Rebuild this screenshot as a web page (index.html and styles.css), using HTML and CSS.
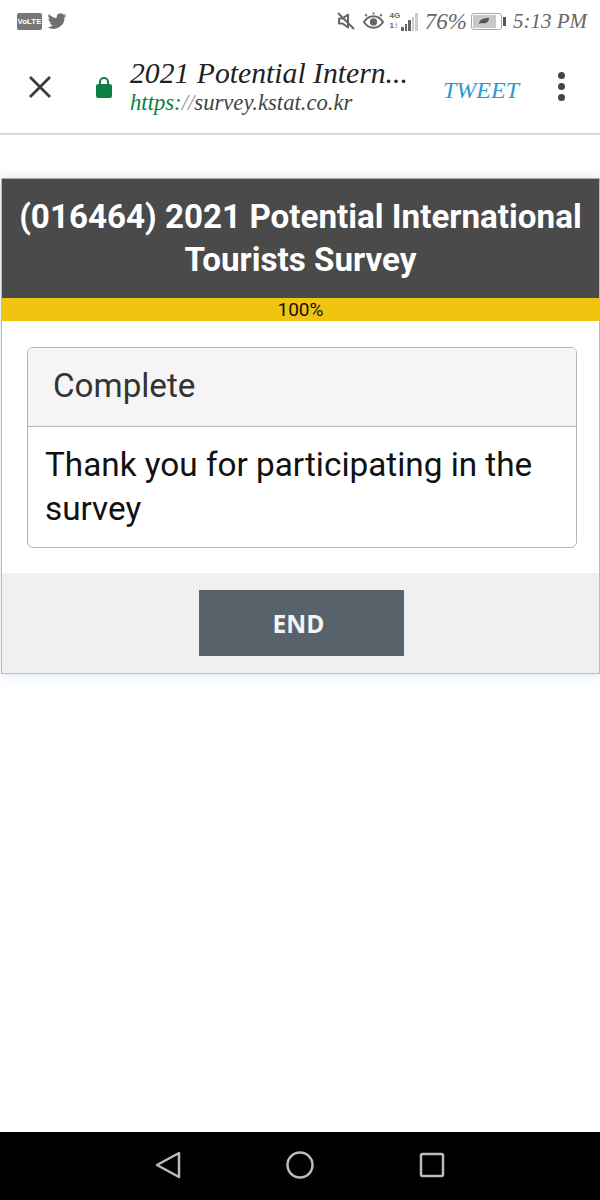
FILE: index.html
```html
<!DOCTYPE html>
<html lang="en">
<head>
  <meta charset="UTF-8">
  <meta name="viewport" content="width=device-width, initial-scale=1.0">
  <title>2021 Potential International Tourists Survey</title>
  <link rel="stylesheet" href="styles.css">
</head>
<body>
  <div id="app">
    <div class="status-bar">
      <div class="status-left">
        <span class="volte">VoLTE</span>
        <svg class="icon-bird" viewBox="0 0 24 24"><path d="M23 5c-.8.4-1.7.6-2.600.7.900-.6 1.600-1.400 2-2.500-.9.500-1.800.9-2.900 1.100A4.600 4.600 0 0 0 11.700 8.500C7.900 8.300 4.500 6.500 2.200 3.700c-1.200 2.100-.6 4.800 1.400 6.200-.7 0-1.400-.2-2-.6 0 2.300 1.600 4.200 3.700 4.600-.7.200-1.400.2-2.100.1.600 1.900 2.300 3.200 4.300 3.200A9.300 9.300 0 0 1 .8 19.200 13.100 13.100 0 0 0 21 7.500c.8-.7 1.500-1.500 2-2.500z"/></svg>
      </div>
      <div class="status-right">
        <svg class="icon-mute" viewBox="0 0 20 20"><path class="outline" d="M3 7.500h3.500L12 3.500v13l-5.500-4H3z"/><path class="slash" d="M2 2l16 16"/></svg>
        <svg class="icon-eye" viewBox="0 0 24 20"><path class="line" d="M2 11c3-4.500 6-6 10-6s7 1.500 10 6c-3 4.500-6 6-10 6s-7-1.500-10-6z"/><circle cx="12" cy="11" r="3.800"/><path class="line" d="M5 5L3.500 3M12 3V1M19 5l1.500-2"/></svg>
        <div class="network">
          <div class="network-labels"><span>4G</span><span>1↕</span></div>
          <div class="bars">
            <i class="bar b1"></i><i class="bar b2"></i><i class="bar b3"></i><i class="bar b4 off"></i><i class="bar b5 off"></i>
          </div>
        </div>
        <span class="status-text">76%</span>
        <div class="battery">
          <div class="battery-body"><div class="battery-fill"><svg viewBox="0 0 12 8"><path d="M1 7C1 3 5 1 11 1c0 4-3 6-7 5z"/></svg></div></div>
          <div class="battery-tip"></div>
        </div>
        <span class="status-text time">5:13 PM</span>
      </div>
    </div>

    <div class="toolbar">
      <svg class="icon-close" viewBox="0 0 24 24"><path d="M2 2l20 20M22 2L2 22"/></svg>
      <svg class="icon-lock" viewBox="0 0 18 22"><path class="shackle" d="M5 9V6a4 4 0 0 1 8 0v3"/><rect x="1" y="8" width="16" height="14" rx="2.500"/></svg>
      <div class="toolbar-title">
        <div class="page-title">2021 Potential Intern...</div>
        <div class="page-url"><span class="scheme">https:</span><span class="slashes">//</span>survey.kstat.co.kr</div>
      </div>
      <span class="tweet">TWEET</span>
      <div class="menu-dots"><i></i><i></i><i></i></div>
    </div>

    <div class="content">
      <div class="survey">
        <div class="survey-head">(016464) 2021 Potential International Tourists Survey</div>
        <div class="progress">100%</div>
        <div class="survey-body">
          <div class="panel">
            <div class="panel-head">Complete</div>
            <div class="panel-text">Thank you for participating in the survey</div>
          </div>
        </div>
        <div class="survey-foot">
          <a class="end-btn">END</a>
        </div>
      </div>
    </div>

    <div class="nav-bar">
      <svg viewBox="0 0 26 28"><path d="M24 2v24L2 14z"/></svg>
      <svg viewBox="0 0 28 28"><circle cx="14" cy="14" r="12.500"/></svg>
      <svg viewBox="0 0 26 26"><rect x="2" y="2" width="22" height="22" rx="1.500"/></svg>
    </div>
  </div>
</body>
</html>
```

FILE: styles.css
```css
* {
  box-sizing: border-box;
}
html, body {
  margin: 0;
  padding: 0;
}
body {
  width: 600px;
  height: 1200px;
  overflow: hidden;
  background-color: #fff;
  font-family: Roboto, "Liberation Sans", sans-serif;
}
#app {
  height: 1200px;
  display: flex;
  flex-direction: column;
}

/* status bar */
.status-bar {
  height: 42px;
  padding: 0 13px 0 17px;
  display: flex;
  justify-content: space-between;
  align-items: center;
  color: #666;
}
.status-left, .status-right {
  display: flex;
  align-items: center;
}
.volte {
  width: 25px;
  height: 17px;
  background-color: #777;
  border-radius: 2px;
  color: #fff;
  font: bold 8px/17px "Liberation Sans", sans-serif;
  text-align: center;
}
.icon-bird {
  width: 20px;
  height: 20px;
  margin-left: 5px;
  fill: #707070;
}
.icon-mute {
  width: 20px;
  height: 20px;
  fill: none;
}
.icon-mute .outline {
  stroke: #666;
  stroke-width: 2;
  stroke-linejoin: round;
}
.icon-mute .slash {
  stroke: #666;
  stroke-width: 2;
}
.icon-eye {
  width: 23px;
  height: 20px;
  margin-left: 6px;
  fill: #666;
}
.icon-eye .line {
  fill: none;
  stroke: #666;
  stroke-width: 2;
}
.network {
  margin-left: 5px;
  display: flex;
  align-items: flex-end;
  height: 20px;
}
.network-labels {
  display: flex;
  flex-direction: column;
  font: bold 8px/10px "Liberation Sans", sans-serif;
}
.bars {
  display: flex;
  align-items: flex-end;
  gap: 1px;
  margin-left: 1px;
  height: 18px;
}
.bar {
  width: 2.500px;
  background-color: #666;
}
.bar.off {
  background-color: #ccc;
}
.b1 { height: 4px; }
.b2 { height: 7px; }
.b3 { height: 11px; }
.b4 { height: 14px; }
.b5 { height: 18px; }
.status-text {
  font: italic 23px/1 "Liberation Serif", serif;
  color: #666;
  margin-left: 7px;
  white-space: nowrap;
}
.status-text.time {
  margin-left: 7px;
  font-size: 21px;
}
.battery {
  display: flex;
  align-items: center;
  margin-left: 4px;
}
.battery-body {
  width: 31px;
  height: 17px;
  border: 1px solid #aaa;
  border-radius: 3px;
  padding: 1px;
  background-color: #fff;
}
.battery-fill {
  width: 23px;
  height: 13px;
  background-color: #c8c8c8;
  display: flex;
  align-items: center;
  justify-content: center;
}
.battery-fill svg {
  width: 12px;
  height: 8px;
  fill: #555;
}
.battery-tip {
  width: 3px;
  height: 9px;
  margin-left: 1px;
  background-color: #555;
}

/* toolbar */
.toolbar {
  height: 93px;
  display: flex;
  align-items: center;
  border-bottom: 2px solid #d8d8d8;
  padding-bottom: 2px;
}
.icon-close {
  width: 24px;
  height: 24px;
  margin-left: 28px;
  fill: none;
  stroke: #3c3c3c;
  stroke-width: 2.800;
}
.icon-lock {
  width: 18px;
  height: 22px;
  margin-left: 43px;
  fill: #0b8043;
}
.icon-lock .shackle {
  fill: none;
  stroke: #0b8043;
  stroke-width: 2;
}
.toolbar-title {
  width: 285px;
  margin-left: 17px;
  font-family: "Liberation Serif", serif;
  font-style: italic;
  white-space: nowrap;
}
.page-title {
  font-size: 29.700px;
  line-height: 32px;
  color: #222;
}
.page-url {
  font-size: 22.700px;
  line-height: 28px;
  color: #444;
}
.scheme {
  color: #0b8043;
}
.slashes {
  color: #999;
}
.tweet {
  margin-top: 6px;
  margin-left: 28px;
  font: italic 24px/1 "Liberation Serif", serif;
  color: #2b9bd8;
}
.menu-dots {
  margin-left: 39px;
  display: flex;
  flex-direction: column;
  gap: 4px;
}
.menu-dots i {
  display: block;
  width: 7px;
  height: 7px;
  border-radius: 50%;
  background-color: #444;
}

/* survey card */
.content {
  flex: 1;
  padding-top: 43px;
}
.survey {
  border: 1px solid #bbb;
  border-top-color: #aaa;
  box-shadow: 0 0 10px rgba(120, 170, 230, 0.35);
  margin-left: 1px;
}
.survey-head {
  height: 119px;
  padding: 16px 8px 0;
  background-color: #4a4a4a;
  color: #fff;
  font-size: 33.200px;
  font-weight: 700;
  line-height: 43px;
  text-align: center;
}
.progress {
  height: 23px;
  background-color: #f1c40f;
  color: #111;
  font-size: 19px;
  line-height: 23px;
  text-align: center;
}
.survey-body {
  height: 252px;
  padding: 26px 22px 0 25px;
  background-color: #fff;
}
.panel {
  border: 1px solid #b4b4b4;
  border-radius: 6px;
  overflow: hidden;
  height: 201px;
}
.panel-head {
  height: 79px;
  padding-left: 25px;
  background-color: #f5f5f5;
  border-bottom: 1px solid #b4b4b4;
  color: #333;
  font-size: 33.200px;
  line-height: 76px;
}
.panel-text {
  padding: 16px 17px;
  color: #111;
  font-size: 33.300px;
  line-height: 44px;
}
.survey-foot {
  height: 100px;
  padding-top: 17px;
  background-color: #f0f0f0;
  display: flex;
  justify-content: center;
}
.end-btn {
  width: 205px;
  height: 66px;
  margin-left: 2px;
  padding-right: 6px;
  background-color: #58626a;
  color: #f4f4f4;
  font: bold 24.500px/67px "Open Sans", sans-serif;
  text-align: center;
}

/* android nav */
.nav-bar {
  height: 68px;
  background-color: #000;
  display: flex;
  align-items: center;
  padding-left: 154px;
  padding-bottom: 3px;
}
.nav-bar svg {
  width: 28px;
  height: 28px;
  fill: none;
  stroke: #bbb;
  stroke-width: 2.500;
  stroke-linejoin: round;
}
.nav-bar svg:nth-child(2) {
  margin-left: 104px;
}
.nav-bar svg:nth-child(3) {
  margin-left: 105px;
  width: 26px;
  height: 26px;
}
```
